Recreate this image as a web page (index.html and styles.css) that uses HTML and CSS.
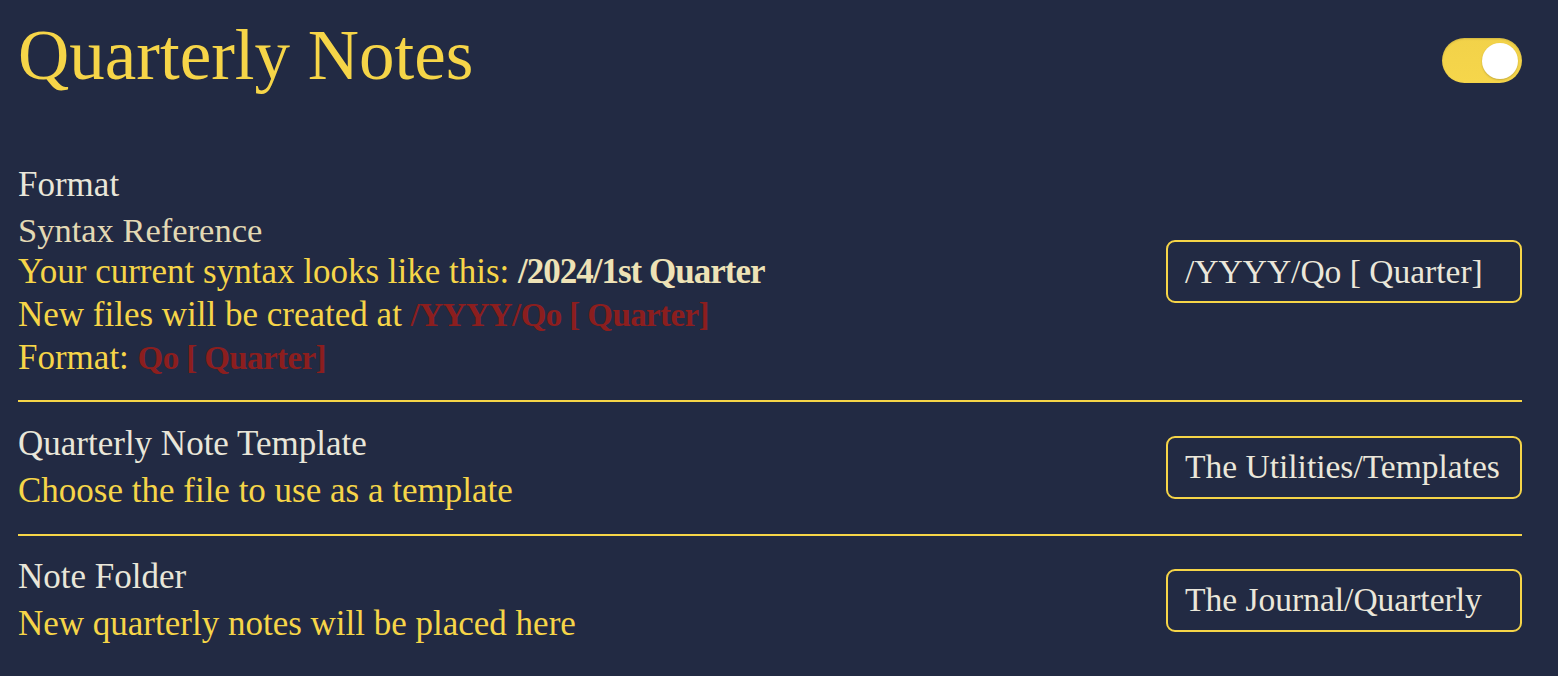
FILE: index.html
```html
<!DOCTYPE html>
<html lang="en">
<head>
<meta charset="utf-8">
<title>Quarterly Notes</title>
<link rel="stylesheet" href="styles.css">
</head>
<body>
<main class="page">
  <header class="header">
    <h1 class="title">Quarterly Notes</h1>
    <div class="toggle"><span class="knob"></span></div>
  </header>

  <section class="group group-first">
    <div class="heading">Format</div>
    <div class="setting setting-top">
      <div class="info">
        <div class="name name-beige">Syntax Reference</div>
        <div class="desc">
          <div class="line">Your current syntax looks like this: <b class="sample">/2024/1st Quarter</b></div>
          <div class="line">New files will be created at <span class="code">/YYYY/Qo [ Quarter]</span></div>
          <div class="line">Format: <span class="code">Qo [ Quarter]</span></div>
        </div>
      </div>
      <div class="field field-top">/YYYY/Qo [ Quarter]</div>
    </div>
  </section>

  <section class="group">
    <div class="setting">
      <div class="info">
        <div class="name">Quarterly Note Template</div>
        <div class="desc"><div class="line">Choose the file to use as a template</div></div>
      </div>
      <div class="field">The Utilities/Templates</div>
    </div>
  </section>

  <section class="group group-last">
    <div class="setting">
      <div class="info">
        <div class="name">Note Folder</div>
        <div class="desc"><div class="line">New quarterly notes will be placed here</div></div>
      </div>
      <div class="field">The Journal/Quarterly</div>
    </div>
  </section>
</main>
</body>
</html>
```

FILE: styles.css
```css
html, body {
  margin: 0;
  padding: 0;
  background: #222a43;
}

body {
  font-family: "Liberation Serif", "Times New Roman", serif;
  color: #e9e6d9;
  height: 676px;
  overflow: hidden;
}

.page {
  padding: 20px 36px 0 18px;
}

.header {
  display: flex;
  justify-content: space-between;
  align-items: flex-start;
}

.title {
  margin: 0;
  font-weight: normal;
  font-size: 71px;
  line-height: 71px;
  color: #f6d548;
}

.toggle {
  margin-top: 18px;
  width: 80px;
  height: 45px;
  border-radius: 22.5px;
  background: linear-gradient(180deg, #f2d249 0%, #f6d64b 100%);
  box-shadow: inset 0 1px 2px rgba(0, 0, 0, 0.15);
  display: flex;
  justify-content: flex-end;
  align-items: center;
  padding: 0 4px;
  box-sizing: border-box;
}

.knob {
  width: 36px;
  height: 36px;
  border-radius: 50%;
  background: #ffffff;
  box-shadow: 0 1px 2px rgba(0, 0, 0, 0.2);
}

.group {
  border-bottom: 2px solid #f6d548;
  padding: 20px 0 22px;
}

.group-first {
  margin-top: 72px;
  padding-top: 0;
  padding-bottom: 21px;
}

.group-last {
  border-bottom: none;
  padding-top: 19px;
}

.heading {
  font-size: 35px;
  line-height: 43px;
  color: #e9e6d9;
}

.setting {
  display: flex;
  justify-content: space-between;
  align-items: center;
}

.setting-top {
  align-items: flex-start;
  margin-top: 5px;
}

.info {
  display: flex;
  flex-direction: column;
  gap: 4px;
}

.setting-top .info {
  gap: 0;
}

.name {
  font-size: 35px;
  line-height: 43px;
  color: #e9e6d9;
}

.name-beige {
  color: #e3d9b4;
  line-height: 39px;
  font-size: 34.5px;
}

.desc {
  font-size: 35px;
  line-height: 43px;
  color: #f6d548;
}

.sample {
  color: #eee2b6;
  font-weight: bold;
  letter-spacing: -1px;
  line-height: 1;
}

.code {
  color: #8c1e1e;
  font-size: 33px;
  font-weight: bold;
  letter-spacing: -0.6px;
  line-height: 1;
}

.field {
  width: 356px;
  height: 63px;
  margin-top: 0;
  box-sizing: border-box;
  border: 2px solid #f6d548;
  border-radius: 9px;
  padding: 0 17px;
  display: flex;
  align-items: center;
  font-size: 33.5px;
  color: #ebe7da;
  white-space: nowrap;
  overflow: hidden;
}

.field-top {
  margin-top: 29px;
}
```
